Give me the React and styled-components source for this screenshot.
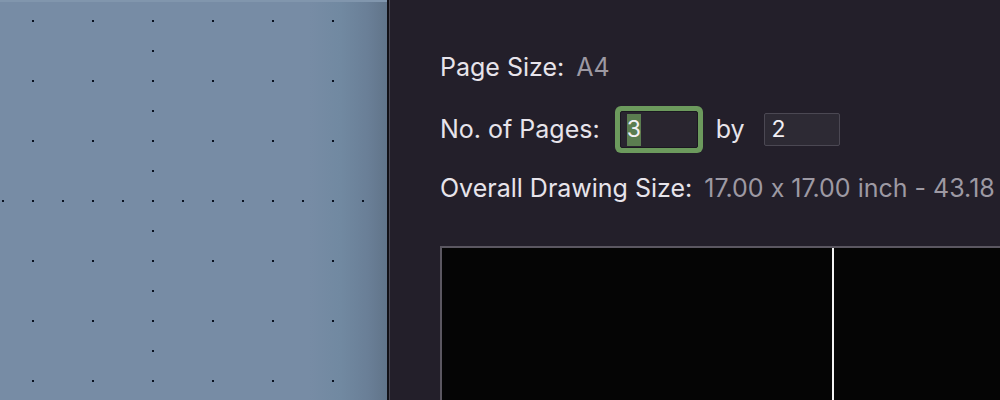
import React from 'react';
import styled, { createGlobalStyle } from 'styled-components';

const GlobalStyle = createGlobalStyle`
  html, body {
    margin: 0;
    padding: 0;
    background: #231f2a;
  }
  body {
    font-family: Inter, "Noto Sans", "Liberation Sans", sans-serif;
    font-feature-settings: "calt" 0;
  }
`;

const Window = styled.div`
  display: flex;
  width: 1000px;
  height: 400px;
  overflow: hidden;
`;

const Canvas = styled.div`
  width: 387px;
  height: 400px;
  flex-shrink: 0;
  background: linear-gradient(
    to right,
    #778ca5 0%,
    #778ca5 80%,
    #7189a1 88%,
    #6a7f97 95%,
    #617489 100%
  );
  border-top: 2px solid #8196ad;
  box-sizing: border-box;
  svg {
    display: block;
  }
`;

const Divider = styled.div`
  width: 3px;
  flex-shrink: 0;
  background: #4b4751;
  border-left: 2px solid #121016;
  box-sizing: border-box;
`;

const Panel = styled.div`
  flex: 1;
  min-width: 0;
  padding: 37px 0 0 50px;
  display: flex;
  flex-direction: column;
  overflow: hidden;
`;

const Row = styled.div`
  display: flex;
  align-items: center;
  flex-shrink: 0;
  height: ${p => p.$h}px;
  white-space: nowrap;
  font-size: 25px;
  line-height: 1;
`;

const Label = styled.span`
  color: #e7e4eb;
  margin-right: ${p => p.$gap || 12}px;
`;

const Value = styled.span`
  color: #9d99a3;
`;

const Field = styled.div`
  display: flex;
  align-items: center;
  flex-shrink: 0;
  box-sizing: border-box;
  width: ${p => p.$w}px;
  height: ${p => p.$h}px;
  padding-left: ${p => p.$pad}px;
  background: ${p => (p.$focused ? '#29252f' : '#2d2a34')};
  border: 1px solid ${p => (p.$focused ? '#1b1820' : '#4b4853')};
  border-radius: 2px;
  box-shadow: ${p => (p.$focused ? '0 0 0 5px #6c9a5d' : 'none')};
  color: #f2f0f4;
  font-size: 23px;
`;

const Selected = styled.span`
  background: #5b7d50;
  padding: 4px 0 5px;
`;

const By = styled.span`
  color: #e7e4eb;
  margin: 0 19px 0 18px;
`;

const Preview = styled.div`
  flex-shrink: 0;
  margin-top: 32px;
  height: 200px;
  display: flex;
  background: #050505;
  border-top: 2px solid #5b5761;
  border-left: 2px solid #5b5761;
`;

const Sheet = styled.div`
  width: ${p => p.$w}px;
  flex-shrink: 0;
  border-right: ${p => (p.$edge ? '2px solid #f4f4f4' : 'none')};
`;

const majorX = [33, 93, 153, 213, 273, 333];
const majorY = [21, 81, 141, 201, 261, 321, 381];
const axisY = [51, 111, 171, 231, 291, 351];
const axisX = [3, 63, 123, 183, 243, 303, 363];

function DotGrid() {
  const dots = [];
  majorY.forEach(y => majorX.forEach(x => dots.push([x, y])));
  axisY.forEach(y => dots.push([153, y]));
  axisX.forEach(x => dots.push([x, 201]));
  return (
    <svg width="387" height="398" viewBox="0 2 387 398">
      {dots.map(([x, y], i) => (
        <rect key={i} x={x - 1} y={y - 1} width="2" height="2" fill="#0b1322" />
      ))}
    </svg>
  );
}

export default function App() {
  return (
    <>
      <GlobalStyle />
      <Window>
        <Canvas>
          <DotGrid />
        </Canvas>
        <Divider />
        <Panel>
          <Row $h={60}>
            <Label>Page Size:</Label>
            <Value>A4</Value>
          </Row>
          <Row $h={65}>
            <Label $gap={20}>No. of Pages:</Label>
            <Field $focused $w={78} $h={37} $pad={6}>
              <Selected>3</Selected>
            </Field>
            <By>by</By>
            <Field $w={76} $h={33} $pad={7}>2</Field>
          </Row>
          <Row $h={52}>
            <Label>Overall Drawing Size:</Label>
            <Value>17.00 x 17.00 inch - 43.18 x 43.18 cm</Value>
          </Row>
          <Preview>
            <Sheet $w={390} $edge />
            <Sheet $w={390} />
          </Preview>
        </Panel>
      </Window>
    </>
  );
}
